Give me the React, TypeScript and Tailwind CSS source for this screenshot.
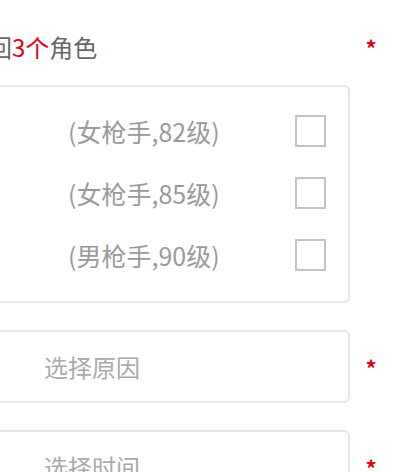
const roles = ["(女枪手,82级)", "(女枪手,85级)", "(男枪手,90级)"];

function Star() {
  return (
    <span className="w-[42px] shrink-0 text-center text-[22px] leading-none font-bold text-[#e60012]">*</span>
  );
}

export default function App() {
  return (
    <div
      className="w-[403px] h-[472px] overflow-hidden bg-white"
      style={{ fontFamily: '"Noto Sans CJK SC", "Noto Sans", sans-serif' }}
    >
      <div className="ml-[-20px] pt-[30px]">
        <div className="flex items-center h-[34px]">
          <div className="w-[370px] shrink-0 pl-[8px] text-[24px] leading-none text-[#666]">
            回<span className="text-[#e60012]">3个</span>角色
          </div>
          <Star />
        </div>

        <div className="flex items-start mt-[21px]">
          <div className="w-[370px] shrink-0 border-2 border-[#e6e6e6] rounded-[6px] pt-[13px] pb-[15px]">
            {roles.map((r) => (
              <div key={r} className="flex items-center justify-between h-[62px] pl-[86px] pr-[22px]">
                <span className="text-[25px] leading-none text-[#9a9a9a]">{r}</span>
                <span className="w-[31px] h-[32px] border-2 border-[#c2c2c2] bg-white" />
              </div>
            ))}
          </div>
        </div>

        <div className="flex items-center mt-[27px]">
          <div className="w-[370px] shrink-0 h-[73px] border-2 border-[#e6e6e6] rounded-[6px] flex items-center pl-[62px]">
            <span className="text-[24px] leading-none text-[#aaa]">选择原因</span>
          </div>
          <Star />
        </div>

        <div className="flex items-center mt-[27px]">
          <div className="w-[370px] shrink-0 h-[73px] border-2 border-[#e6e6e6] rounded-[6px] flex items-center pl-[62px]">
            <span className="text-[24px] leading-none text-[#aaa]">选择时间</span>
          </div>
          <Star />
        </div>
      </div>
    </div>
  );
}
